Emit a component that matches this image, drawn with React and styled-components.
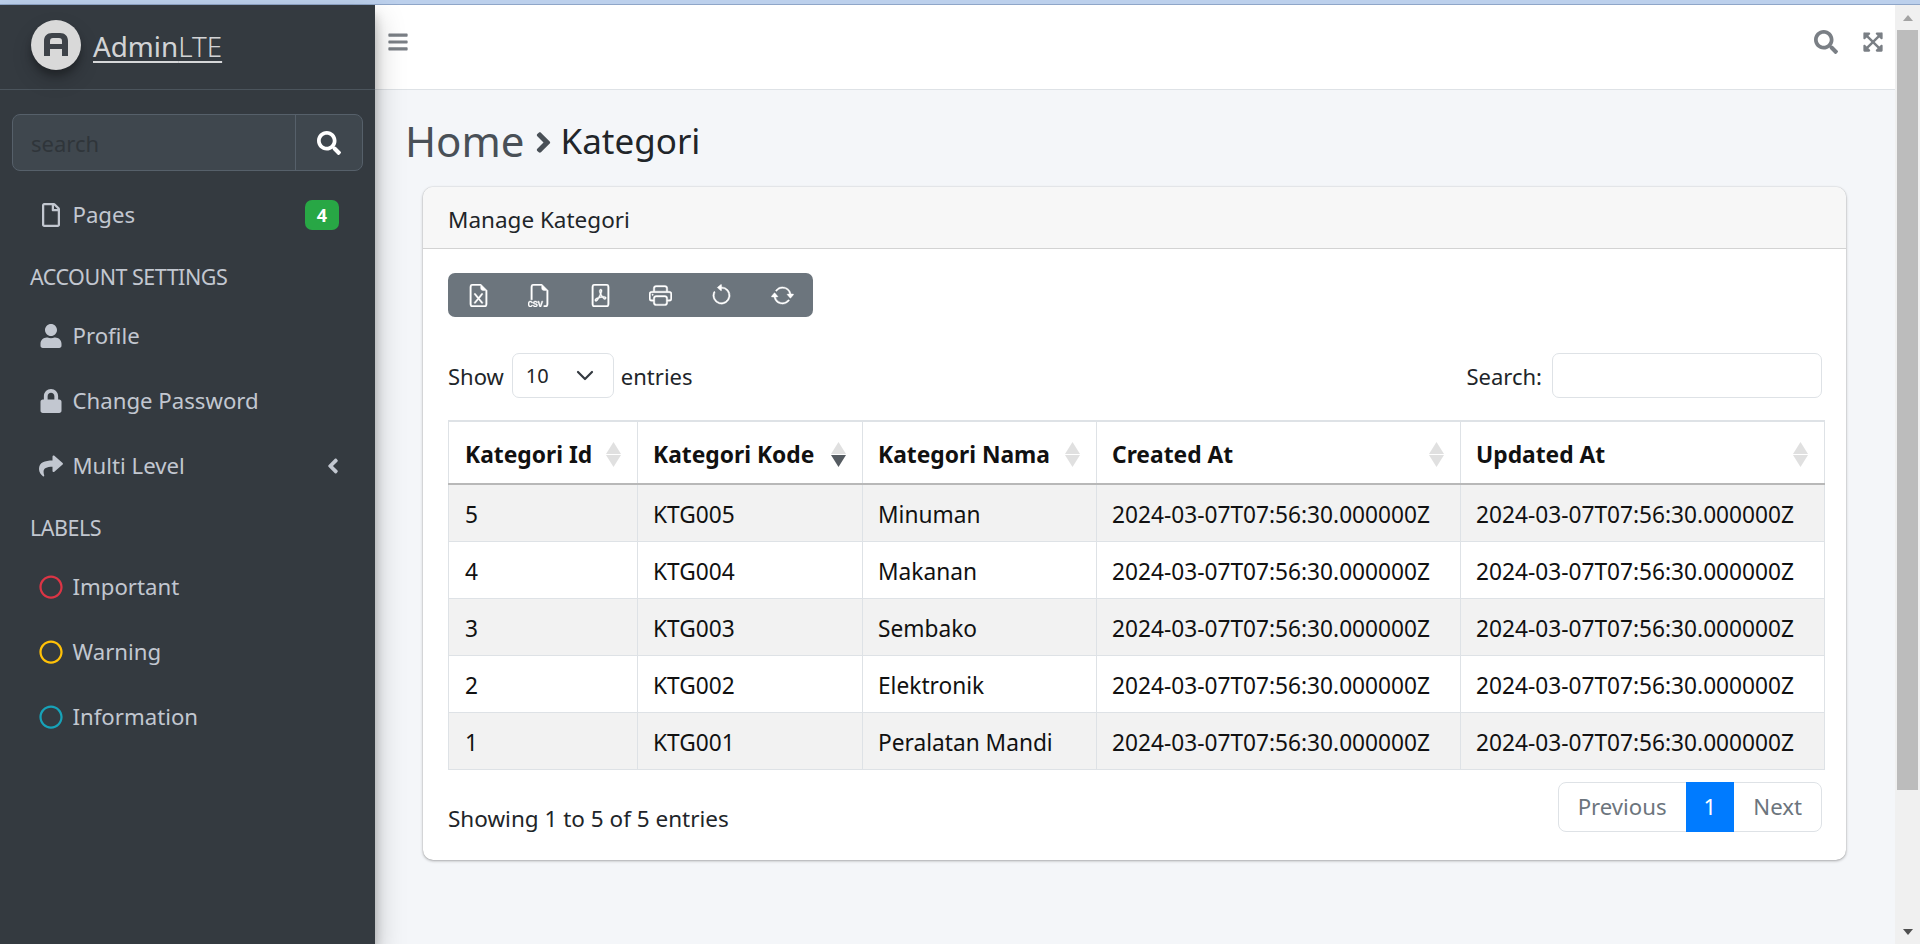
import styled, { createGlobalStyle } from 'styled-components'
import {
  FaRegFile, FaUser, FaLock, FaShare, FaAngleLeft, FaAngleRight, FaSearch, FaBars,
  FaExpandArrowsAlt, FaRegCircle,
} from 'react-icons/fa'
import {
  BsFileEarmarkExcel, BsFiletypeCsv, BsFilePdf, BsPrinter, BsArrowCounterclockwise, BsArrowRepeat,
} from 'react-icons/bs'

const GlobalStyle = createGlobalStyle`
  html, body, #root {
    margin: 0;
    height: 100%;
    overflow: hidden;
  }
  body {
    font-family: "Noto Sans", "Open Sans", sans-serif;
    font-size: 22.5px;
    color: #212529;
    background: #f4f6f9;
  }
  * { box-sizing: border-box; }
`

const categories = [
  { id: 5, code: 'KTG005', name: 'Minuman' },
  { id: 4, code: 'KTG004', name: 'Makanan' },
  { id: 3, code: 'KTG003', name: 'Sembako' },
  { id: 2, code: 'KTG002', name: 'Elektronik' },
  { id: 1, code: 'KTG001', name: 'Peralatan Mandi' },
]

const stamp = '2024-03-07T07:56:30.000000Z'

const columns = [
  { label: 'Kategori Id', width: 189 },
  { label: 'Kategori Kode', width: 225, sorted: true },
  { label: 'Kategori Nama', width: 234 },
  { label: 'Created At', width: 364 },
  { label: 'Updated At', width: 364 },
]

export default function App() {
  return (
    <Page>
      <GlobalStyle />
      <WindowEdge />
      <Body>
        <Sidebar>
          <Brand>
            <LogoCircle>
              <svg width="34" height="34" viewBox="0 0 34 34">
                <path d="M5 28V13c0-5 3-8 8-8h8c5 0 8 3 8 8v15h-6v-7H11v7zM11 16h12v-3c0-2-1-3-3-3h-6c-2 0-3 1-3 3z" fill="#3e4349" />
              </svg>
            </LogoCircle>
            <BrandText>Admin<BrandLight>LTE</BrandLight></BrandText>
          </Brand>
          <SearchGroup>
            <SearchInput placeholder="search" />
            <SearchButton><FaSearch size={24} /></SearchButton>
          </SearchGroup>
          <NavItem>
            <NavIcon><FaRegFile /></NavIcon>
            <span>Pages</span>
            <Badge>4</Badge>
          </NavItem>
          <NavHeader>ACCOUNT SETTINGS</NavHeader>
          <NavItem>
            <NavIcon><FaUser /></NavIcon>
            <span>Profile</span>
          </NavItem>
          <NavItem>
            <NavIcon><FaLock /></NavIcon>
            <span>Change Password</span>
          </NavItem>
          <NavItem>
            <NavIcon><FaShare /></NavIcon>
            <span>Multi Level</span>
            <Caret><FaAngleLeft /></Caret>
          </NavItem>
          <NavHeader>LABELS</NavHeader>
          <NavItem>
            <NavIcon $color="#dc3545"><FaRegCircle /></NavIcon>
            <span>Important</span>
          </NavItem>
          <NavItem>
            <NavIcon $color="#ffc107"><FaRegCircle /></NavIcon>
            <span>Warning</span>
          </NavItem>
          <NavItem>
            <NavIcon $color="#17a2b8"><FaRegCircle /></NavIcon>
            <span>Information</span>
          </NavItem>
        </Sidebar>
        <Main>
          <Navbar>
            <NavbarIcon><FaBars size={22} /></NavbarIcon>
            <NavbarRight>
              <NavbarIcon><FaSearch size={24} /></NavbarIcon>
              <NavbarIcon><FaExpandArrowsAlt size={22} /></NavbarIcon>
            </NavbarRight>
          </Navbar>
          <Content>
            <Title>
              Home
              <TitleArrow><FaAngleRight /></TitleArrow>
              <TitleSmall>Kategori</TitleSmall>
            </Title>
            <Card>
              <CardHeader>Manage Kategori</CardHeader>
              <CardBody>
                <Toolbar>
                  <ToolButton><BsFileEarmarkExcel /></ToolButton>
                  <ToolButton><BsFiletypeCsv /></ToolButton>
                  <ToolButton><BsFilePdf /></ToolButton>
                  <ToolButton><BsPrinter /></ToolButton>
                  <ToolButton><BsArrowCounterclockwise /></ToolButton>
                  <ToolButton><BsArrowRepeat /></ToolButton>
                </Toolbar>
                <Controls>
                  <Label>
                    Show
                    <SelectBox>
                      10
                      <svg width="20" height="12" viewBox="0 0 20 12">
                        <path d="M3 2l7 7 7-7" fill="none" stroke="#343a40" strokeWidth="2.2" strokeLinecap="round" strokeLinejoin="round" />
                      </svg>
                    </SelectBox>
                    entries
                  </Label>
                  <Label>
                    Search:
                    <FilterInput />
                  </Label>
                </Controls>
                <Table>
                  <thead>
                    <tr>
                      {columns.map(col => (
                        <Th key={col.label} $width={col.width}>
                          {col.label}
                          <SortMark>
                            <svg width="15" height="25" viewBox="0 0 15 25">
                              <path d="M7.5 0L15 12H0z" fill="#e0e0e0" />
                              <path d="M7.5 25L15 13H0z" fill={col.sorted ? '#555b61' : '#e0e0e0'} />
                            </svg>
                          </SortMark>
                        </Th>
                      ))}
                    </tr>
                  </thead>
                  <tbody>
                    {categories.map((item, index) => (
                      <Row key={item.id} $odd={index % 2 === 0}>
                        <Td>{item.id}</Td>
                        <Td>{item.code}</Td>
                        <Td>{item.name}</Td>
                        <Td>{stamp}</Td>
                        <Td>{stamp}</Td>
                      </Row>
                    ))}
                  </tbody>
                </Table>
                <Footer>
                  <span>Showing 1 to 5 of 5 entries</span>
                  <Pagination>
                    <PageLink>Previous</PageLink>
                    <PageLink $active>1</PageLink>
                    <PageLink>Next</PageLink>
                  </Pagination>
                </Footer>
              </CardBody>
            </Card>
          </Content>
        </Main>
        <ScrollTrack>
          <ScrollArrow />
          <ScrollThumb />
          <ScrollSpace />
          <ScrollArrow $down />
        </ScrollTrack>
      </Body>
    </Page>
  )
}

const Page = styled.div`
  display: flex;
  flex-direction: column;
  height: 100%;
`

const WindowEdge = styled.div`
  height: 5px;
  flex: none;
  background: #bcd0ec;
  border-bottom: 1px solid #8fa6c8;
`

const Body = styled.div`
  display: flex;
  flex: 1;
  min-height: 0;
`

const Sidebar = styled.aside`
  width: 375px;
  flex: none;
  position: relative;
  z-index: 2;
  background: #343a40;
  color: #c2c7d0;
  box-shadow: 0 14px 28px rgba(0, 0, 0, 0.25), 0 10px 10px rgba(0, 0, 0, 0.22);
`

const Brand = styled.div`
  height: 85px;
  display: flex;
  align-items: center;
  gap: 12px;
  padding: 0 0 4px 31px;
  border-bottom: 1px solid #4b545c;
`

const LogoCircle = styled.div`
  width: 50px;
  height: 50px;
  border-radius: 50%;
  background: #d9d9d9;
  display: flex;
  align-items: center;
  justify-content: center;
  box-shadow: 0 10px 20px rgba(0, 0, 0, 0.19), 0 6px 6px rgba(0, 0, 0, 0.23);
`

const BrandText = styled.span`
  margin-top: 2px;
  color: rgba(255, 255, 255, 0.8);
  font-size: 27.8px;
  text-decoration: underline;
  text-underline-offset: 4px;
`

const BrandLight = styled.span`
  font-weight: 300;
`

const SearchGroup = styled.div`
  display: flex;
  height: 57px;
  margin: 24px 12px 11px;
  background: #3f474e;
  border: 1px solid #56606a;
  border-radius: 8px;
`

const SearchInput = styled.input`
  flex: 1;
  min-width: 0;
  padding: 0 18px;
  border: 0;
  background: transparent;
  font: inherit;
  font-size: 22px;
  outline: none;
  &::placeholder { color: #2f353a; opacity: 1; }
`

const SearchButton = styled.div`
  width: 67px;
  flex: none;
  display: flex;
  align-items: center;
  justify-content: center;
  color: #fff;
  border-left: 1px solid #56606a;
`

const NavItem = styled.div`
  height: 65px;
  display: flex;
  align-items: center;
  padding: 0 35px 0 36px;
  font-size: 22.2px;
`

const NavIcon = styled.span`
  width: 30px;
  margin-right: 6.5px;
  flex: none;
  display: flex;
  justify-content: center;
  font-size: 24px;
  color: ${props => props.$color || '#c2c7d0'};
`

const Badge = styled.span`
  margin-left: auto;
  margin-right: 1px;
  width: 34px;
  height: 30px;
  display: flex;
  align-items: center;
  justify-content: center;
  border-radius: 7px;
  background: #28a745;
  color: #fff;
  font-size: 18px;
  font-weight: 700;
`

const Caret = styled.span`
  margin: 0 -5px 0 auto;
  display: flex;
  font-size: 24px;
`

const NavHeader = styled.div`
  height: 56px;
  padding: 15px 0 0 30px;
  font-size: 21.5px;
  letter-spacing: -0.5px;
`

const Main = styled.main`
  flex: 1;
  min-width: 0;
  display: flex;
  flex-direction: column;
`

const Navbar = styled.header`
  height: 85px;
  flex: none;
  display: flex;
  justify-content: space-between;
  padding: 24px 11px 0 12px;
  background: #fff;
  border-bottom: 1px solid #dee2e6;
`

const NavbarRight = styled.div`
  display: flex;
  gap: 24px;
`

const NavbarIcon = styled.span`
  display: flex;
  height: 26px;
  align-items: center;
  color: #7a7f85;
`

const Content = styled.div`
  flex: 1;
  padding: 23px 49px 0 30px;
`

const Title = styled.h1`
  margin: 0 0 20px;
  height: 54px;
  display: flex;
  align-items: center;
  font-size: 42px;
  font-weight: 400;
  color: #495057;
`

const TitleArrow = styled.span`
  display: flex;
  margin: 4px 1px 0 2px;
  font-size: 33px;
`

const TitleSmall = styled.span`
  font-size: 35px;
  color: #212529;
`

const Card = styled.section`
  margin-left: 18px;
  height: 673px;
  background: #fff;
  border-radius: 10px;
  overflow: hidden;
  box-shadow: 0 0 1px rgba(0, 0, 0, 0.3), 0 1px 3px rgba(0, 0, 0, 0.3);
`

const CardHeader = styled.div`
  height: 62px;
  display: flex;
  align-items: center;
  padding: 3px 25px 0;
  background: #f7f7f7;
  border-bottom: 1px solid #d3d3d3;
`

const CardBody = styled.div`
  padding: 24px 21px 0 25px;
`

const Toolbar = styled.div`
  display: flex;
  width: 365px;
  height: 44px;
  background: #6c757d;
  border-radius: 7px;
`

const ToolButton = styled.span`
  flex: 1;
  display: flex;
  align-items: center;
  justify-content: center;
  color: #fff;
  font-size: 23px;
  & svg {
    stroke: currentColor;
    stroke-width: 0.3;
  }
`

const Controls = styled.div`
  display: flex;
  justify-content: space-between;
  margin: 36px 3px 22px 0;
`

const Label = styled.div`
  display: flex;
  align-items: center;
  gap: 7px;
  font-size: 22px;
`

const SelectBox = styled.div`
  width: 102px;
  height: 45px;
  margin-left: 1px;
  display: flex;
  align-items: center;
  justify-content: space-between;
  padding: 0 18px 0 13px;
  background: #fff;
  border: 1px solid #dee2e6;
  border-radius: 7px;
  font-size: 20px;
`

const FilterInput = styled.input`
  width: 270px;
  height: 45px;
  margin-left: 3px;
  background: #fff;
  border: 1px solid #dee2e6;
  border-radius: 7px;
  outline: none;
`

const Table = styled.table`
  width: 1376px;
  table-layout: fixed;
  border-collapse: collapse;
  border: 1px solid #dee2e6;
`

const Th = styled.th`
  position: relative;
  width: ${props => props.$width}px;
  height: 63px;
  padding: 4px 15px 0;
  text-align: left;
  font-size: 22.8px;
  font-weight: 700;
  color: #111;
  background: #fff;
  border: 1px solid #dee2e6;
  border-top-width: 2px;
  border-bottom: 2px solid #b8b8b8;
  &:first-child { padding-left: 16px; }
`

const SortMark = styled.span`
  position: absolute;
  right: 16px;
  top: 20px;
  display: flex;
`

const Row = styled.tr`
  height: 57px;
  background: ${props => (props.$odd ? '#f2f2f2' : '#fff')};
`

const Td = styled.td`
  padding: 4px 15px 0;
  font-size: 22.7px;
  color: #111;
  border: 1px solid #dee2e6;
  &:first-child { padding-left: 16px; }
`

const Footer = styled.div`
  display: flex;
  justify-content: space-between;
  align-items: flex-start;
  margin: 12px 3px 0 0;
  & > span { margin-top: 24px; line-height: 26px; }
`

const Pagination = styled.div`
  display: flex;
  height: 50px;
  font-size: 22.2px;
  border: 1px solid #dee2e6;
  border-radius: 8px;
`

const PageLink = styled.span`
  display: flex;
  align-items: center;
  padding: ${props => (props.$active ? '0 18px' : '0 19px')};
  margin: ${props => (props.$active ? '-1px 0' : '0')};
  color: ${props => (props.$active ? '#fff' : '#6c757d')};
  background: ${props => (props.$active ? '#007bff' : 'transparent')};
`

const ScrollTrack = styled.div`
  width: 25px;
  flex: none;
  display: flex;
  flex-direction: column;
  padding: 0 2px 0 2px;
  background: #f0f0f0;
  border-left: 0;
`

const ScrollArrow = styled.div`
  height: 25px;
  flex: none;
  display: flex;
  align-items: center;
  justify-content: center;
  &::before {
    content: '';
    border-left: 5.5px solid transparent;
    border-right: 5.5px solid transparent;
    ${props => (props.$down ? 'border-top: 6px solid #505050;' : 'border-bottom: 6px solid #a3a3a3;')}
  }
`

const ScrollThumb = styled.div`
  height: 760px;
  flex: none;
  background: #bcbcbc;
`

const ScrollSpace = styled.div`
  flex: 1;
`
